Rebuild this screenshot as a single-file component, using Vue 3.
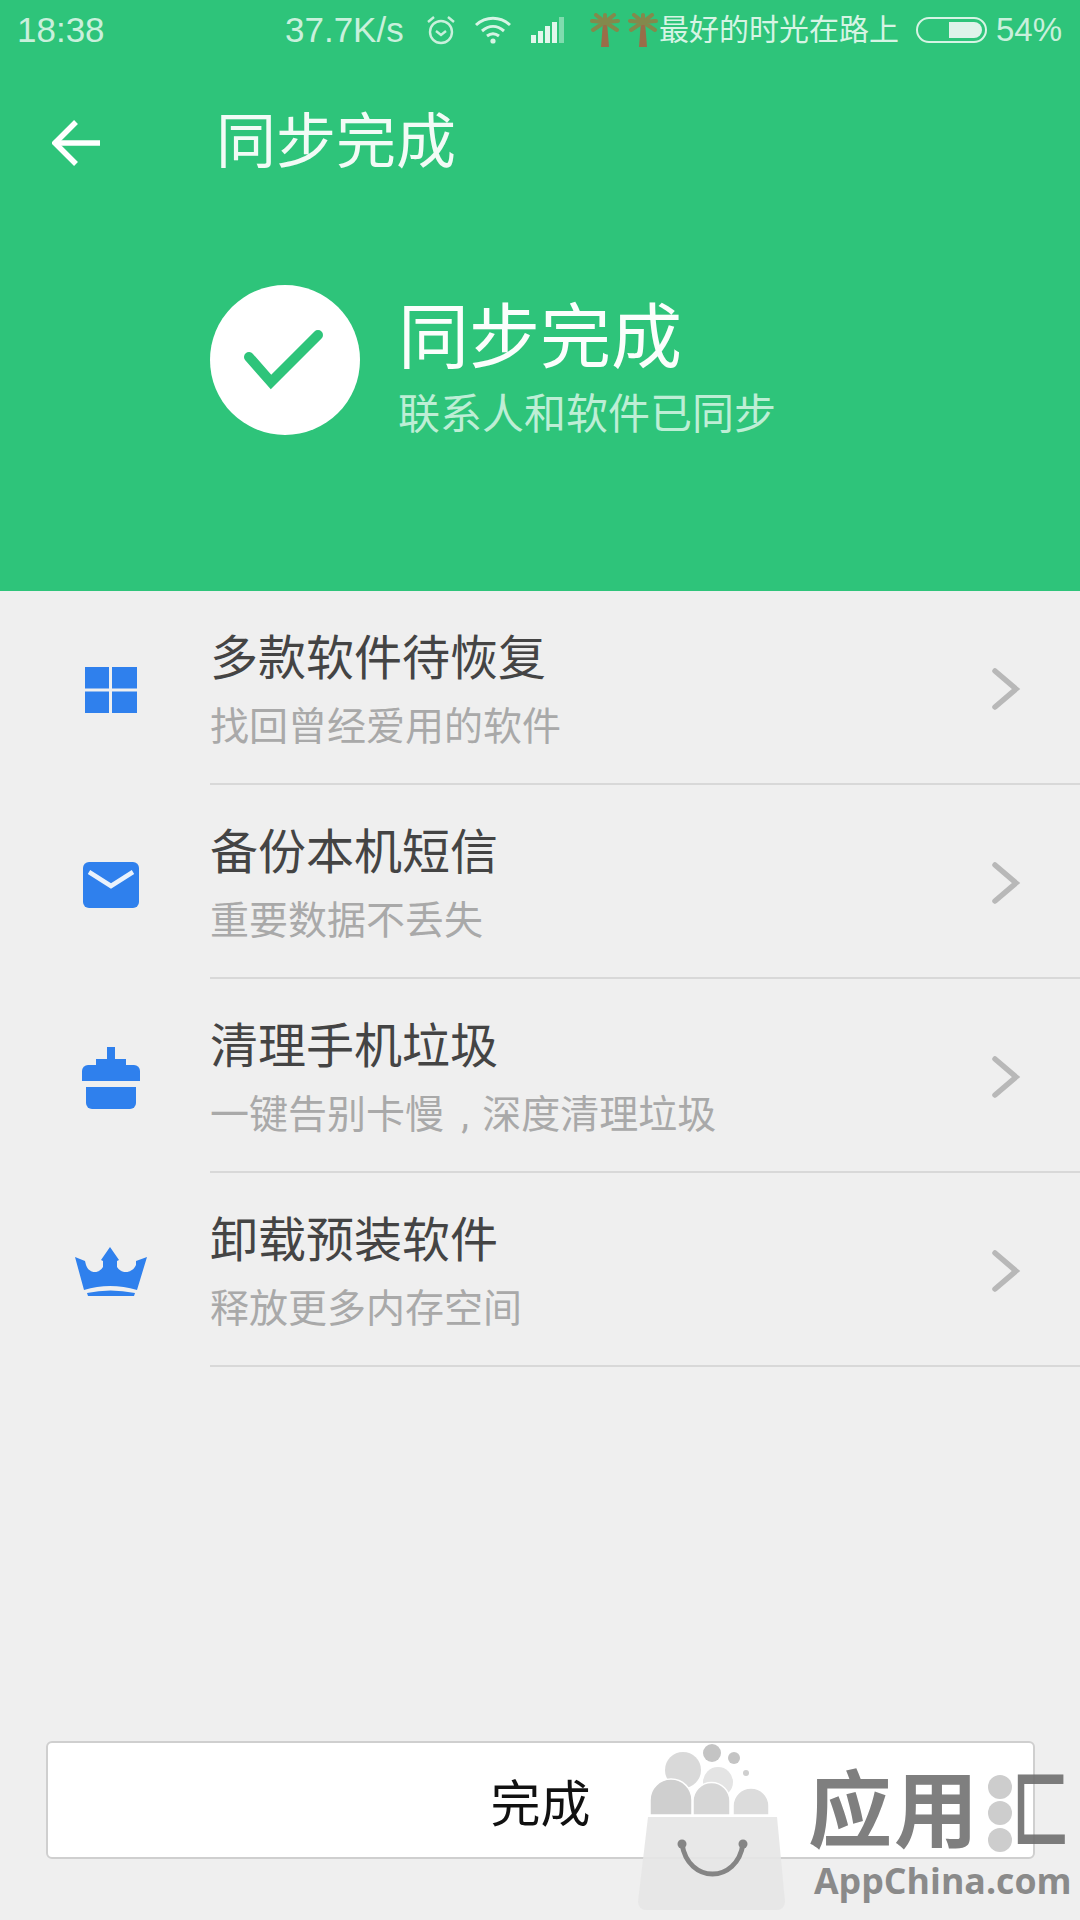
<template>
  <div class="screen">
    <header class="top">
      <div class="status">
        <span class="time">18:38</span>
        <span class="speed">37.7K/s</span>
        <svg class="alarm" viewBox="0 0 32 32" fill="none" stroke="#c9f0dc" stroke-width="2.4">
          <circle cx="16" cy="18" r="11" />
          <path d="M11 17l5 4 5-4" />
          <path d="M3 8l6-5M29 8l-6-5" />
        </svg>
        <svg class="wifi" viewBox="0 0 38 28" fill="none" stroke="#d6f4e4" stroke-width="3">
          <path d="M2 9c10-9 24-9 34 0" />
          <path d="M8 15c7-6 15-6 22 0" />
          <path d="M13 20c4-3 8-3 12 0" />
          <circle cx="19" cy="25" r="2.6" fill="#d6f4e4" stroke="none" />
        </svg>
        <svg class="signal" viewBox="0 0 36 26">
          <rect x="0" y="18" width="5" height="8" fill="#e2f7ec" />
          <rect x="7" y="14" width="5" height="12" fill="#e2f7ec" />
          <rect x="14" y="9" width="5" height="17" fill="#e2f7ec" />
          <rect x="21" y="5" width="5" height="21" fill="#e2f7ec" />
          <rect x="28" y="0" width="5" height="26" fill="#7fdcae" />
        </svg>
        <svg class="palm" viewBox="0 0 68 34" fill="none">
          <g v-for="x in [15, 53]" :key="x" :transform="`translate(${x} 0)`">
            <path d="M-2 9h4l2 25h-8z" fill="#9a6d48" />
            <path d="M0 9L-13 8M0 9L13 8M0 9L-9 2M0 9L9 2M0 9L-12 17M0 9L12 17M0 9V2" stroke="#83894c" stroke-width="4" stroke-linecap="round" />
          </g>
        </svg>
        <span class="carrier">最好的时光在路上</span>
        <div class="battery"><div class="level" :style="{ width: batteryFill }"></div></div>
        <span class="percent">54%</span>
      </div>

      <div class="nav">
        <svg class="back" viewBox="0 0 48 48" fill="none" stroke="#fff" stroke-width="5.5">
          <path d="M48 24H3" />
          <path d="M24 3L3 24l21 21" />
        </svg>
        <span class="nav-title">同步完成</span>
      </div>

      <div class="result">
        <div class="circle">
          <svg viewBox="0 0 150 150" fill="none" stroke="#2ec47a" stroke-width="10" stroke-linecap="round">
            <path d="M39 72L61 97L108 50" />
          </svg>
        </div>
        <div class="result-text">
          <div class="result-title">同步完成</div>
          <div class="result-sub">联系人和软件已同步</div>
        </div>
      </div>
    </header>

    <ul class="list">
      <li v-for="item in items" :key="item.title" class="row">
        <div class="icon">
          <svg v-if="item.icon === 'apps'" width="52" height="46" viewBox="0 0 52 46" fill="#2f80ed">
            <rect x="0" y="0" width="24" height="21.5" />
            <rect x="27" y="0" width="25" height="21.5" />
            <rect x="0" y="24.5" width="24" height="21.5" />
            <rect x="27" y="24.5" width="25" height="21.5" />
          </svg>
          <svg v-if="item.icon === 'mail'" class="mail" width="56" height="46" viewBox="0 0 56 46">
            <rect width="56" height="46" rx="6" fill="#2f80ed" />
            <path d="M6 10l22 14 22-14" fill="none" stroke="#eaf2fc" stroke-width="4.5" />
          </svg>
          <svg v-if="item.icon === 'brush'" width="58" height="62" viewBox="0 0 58 62" fill="#2f80ed">
            <rect x="25" y="0" width="8" height="14" />
            <rect x="14" y="12" width="30" height="8" />
            <path d="M6 18h46a6 6 0 0 1 6 6v10H0V24a6 6 0 0 1 6-6z" />
            <path d="M4 40h50v16a6 6 0 0 1-6 6H10a6 6 0 0 1-6-6z" />
          </svg>
          <svg v-if="item.icon === 'crown'" width="74" height="50" viewBox="0 0 74 50" fill="#2f80ed">
            <path d="M1 10L11 14L12 18C15 27 25 27 29 20L29 14L27 13L36 0L45 13L43 14L43 20C47 27 58 27 62 18L62 14L73 10L63 43Q36 35 10 43Z" />
            <path d="M13 46Q36 41 61 46L60 49H14Z" />
          </svg>
        </div>
        <div class="body">
          <div class="text">
            <div class="title">{{ item.title }}</div>
            <div class="sub">{{ item.sub }}</div>
          </div>
          <svg class="chevron" viewBox="0 0 30 44" fill="none" stroke="#b8b8b8" stroke-width="5.5" stroke-linecap="round">
            <path d="M4 4l21 18L4 40" />
          </svg>
        </div>
      </li>
    </ul>

    <button class="done">完成</button>

    <div class="watermark">
      <svg viewBox="0 0 180 200" width="180" height="200">
        <circle cx="63" cy="50" r="18" fill="#d9d9d9" />
        <circle cx="98" cy="62" r="15" fill="#e4e4e4" />
        <circle cx="92" cy="33" r="9" fill="#c4c4c4" />
        <circle cx="114" cy="38" r="6" fill="#c4c4c4" />
        <circle cx="126" cy="53" r="3" fill="#cfcfcf" />
        <path d="M30 95V80A21 21 0 0 1 72 80V95Z" fill="#cfcfcf" stroke="#fff" stroke-width="1.5" />
        <path d="M73 95V81A18.500 18.500 0 0 1 110 81V95Z" fill="#d6d6d6" stroke="#fff" stroke-width="1.5" />
        <path d="M113 95V86A18 18 0 0 1 149 86V95Z" fill="#dcdcdc" stroke="#fff" stroke-width="1.5" />
        <path d="M28 97H157L165 182a8 8 0 0 1-8 8H26a8 8 0 0 1-8-8z" fill="#e6e6e6" fill-opacity="0.92" />
        <path d="M62 124c6 40 55 40 61 0" fill="none" stroke="#858585" stroke-width="5" />
        <circle cx="62" cy="124" r="4.500" fill="#858585" />
        <circle cx="123" cy="124" r="4.500" fill="#858585" />
      </svg>
      <span class="wm-ying">应用</span>
      <span class="wm-dot d1"></span>
      <span class="wm-dot d2"></span>
      <span class="wm-dot d3"></span>
      <span class="wm-hui">匚</span>
      <span class="wm-url">AppChina.com</span>
    </div>
  </div>
</template>

<script setup>
const batteryFill = '54%'

const items = [
  { icon: 'apps', title: '多款软件待恢复', sub: '找回曾经爱用的软件' },
  { icon: 'mail', title: '备份本机短信', sub: '重要数据不丢失' },
  { icon: 'brush', title: '清理手机垃圾', sub: '一键告别卡慢\u2004\u200a,\u2004深度清理垃圾' },
  { icon: 'crown', title: '卸载预装软件', sub: '释放更多内存空间' }
]
</script>

<style>
html,
body {
  margin: 0;
  background: #efefef;
}
</style>

<style scoped>
.screen {
  position: relative;
  width: 1080px;
  height: 1920px;
  overflow: hidden;
  background: #efefef;
  font-family: "Roboto", "Noto Sans CJK SC", sans-serif;
}

.top {
  height: 591px;
  background: #2ec47a;
  color: #fff;
}

.status {
  display: flex;
  align-items: center;
  height: 60px;
  padding-left: 17px;
  font-size: 35px;
  color: #c9f0dc;
}

.time {
  width: 268px;
  font-family: "Liberation Sans", sans-serif;
}

.speed {
  width: 140px;
  font-family: "Liberation Sans", sans-serif;
}

.alarm {
  width: 32px;
  height: 32px;
  margin-right: 17px;
}

.wifi {
  width: 38px;
  height: 28px;
  margin-right: 19px;
}

.signal {
  width: 36px;
  height: 26px;
  margin-right: 23px;
}

.palm {
  width: 68px;
  height: 34px;
  margin-right: 1px;
}

.carrier {
  width: 240px;
  margin-right: 17px;
  font-size: 30px;
  line-height: 1;
  color: #d6f4e4;
}

.battery {
  display: flex;
  justify-content: flex-end;
  box-sizing: border-box;
  width: 71px;
  height: 26px;
  margin-right: 9px;
  padding: 3px;
  border: 2px solid #d6f4e4;
  border-radius: 13px;
}

.level {
  height: 100%;
  background: #dff3ea;
  border-radius: 0 8px 8px 0;
}

.percent {
  font-family: "Liberation Sans", sans-serif;
  font-size: 33px;
}

.nav {
  display: flex;
  align-items: center;
  height: 166px;
}

.back {
  width: 48px;
  height: 48px;
  margin: 0 116px 0 52px;
}

.nav-title {
  font-size: 60px;
  line-height: 1;
  color: #f2fbf6;
}

.result {
  display: flex;
  align-items: center;
  margin-top: 54px;
  padding-left: 210px;
}

.circle {
  width: 150px;
  height: 150px;
  margin-right: 38px;
  border-radius: 50%;
  background: #fff;
}

.circle svg {
  display: block;
}

.result-text {
  padding-top: 16px;
}

.result-title {
  font-size: 71px;
  line-height: 84px;
  color: #fbfefc;
}

.result-sub {
  margin-top: 10px;
  font-size: 42px;
  line-height: 50px;
  color: #bdeed5;
}

.list {
  margin: 0;
  padding: 0;
  list-style: none;
}

.row {
  display: flex;
  height: 194px;
}

.icon {
  display: flex;
  flex: 0 0 210px;
  align-items: center;
  justify-content: center;
  box-sizing: border-box;
  padding: 4px 0 0 12px;
}

.mail {
  margin-top: 2px;
}

.body {
  display: flex;
  flex: 1;
  align-items: center;
  justify-content: space-between;
  padding-right: 59px;
  border-bottom: 2px solid #d8d8d8;
}

.text {
  padding-top: 5px;
}

.title {
  font-size: 48px;
  line-height: 60px;
  color: #444;
}

.sub {
  margin-top: 14px;
  font-size: 39px;
  line-height: 48px;
  color: #a9a9a9;
}

.chevron {
  width: 30px;
  height: 44px;
  margin-top: 4px;
}

.done {
  display: block;
  box-sizing: border-box;
  width: 989px;
  height: 118px;
  margin: 374px 0 0 46px;
  border: 2px solid #cfcfcf;
  border-radius: 6px;
  background: #fff;
  color: #111;
  font-family: "Noto Sans CJK SC", sans-serif;
  font-size: 50px;
}

/* appchina stamp over the button */
.watermark {
  position: absolute;
  left: 620px;
  top: 1720px;
  width: 460px;
  height: 200px;
}

.watermark svg {
  position: absolute;
  left: 0;
  top: 0;
}

.wm-ying {
  position: absolute;
  left: 188px;
  top: 43px;
  font-family: "Noto Sans CJK SC", sans-serif;
  font-size: 84px;
  font-weight: 700;
  line-height: 84px;
  letter-spacing: 2px;
  color: #7f7f7f;
}

.wm-dot {
  position: absolute;
  left: 368px;
  width: 24px;
  height: 24px;
  border-radius: 50%;
  background: #cdcdcd;
}

.d1 {
  top: 55px;
}

.d2 {
  top: 81px;
}

.d3 {
  top: 108px;
}

.wm-hui {
  position: absolute;
  left: 392px;
  top: 43px;
  font-family: "Noto Sans CJK SC", sans-serif;
  font-size: 84px;
  font-weight: 700;
  line-height: 84px;
  color: rgba(110, 110, 110, 0.9);
  transform: scaleX(0.68);
  transform-origin: left center;
}

.wm-url {
  position: absolute;
  left: 194px;
  top: 140px;
  font-family: "Open Sans", sans-serif;
  font-size: 35.700px;
  font-weight: 700;
  line-height: 40px;
  color: #8a8a8a;
}
</style>
